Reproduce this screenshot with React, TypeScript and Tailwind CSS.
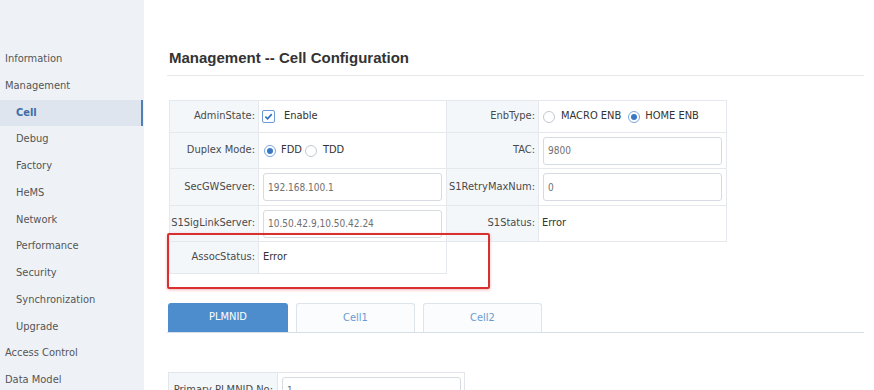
import React from "react";

type NavItem = { label: string; sub?: boolean; active?: boolean };

const nav: NavItem[] = [
  { label: "Information" },
  { label: "Management" },
  { label: "Cell", sub: true, active: true },
  { label: "Debug", sub: true },
  { label: "Factory", sub: true },
  { label: "HeMS", sub: true },
  { label: "Network", sub: true },
  { label: "Performance", sub: true },
  { label: "Security", sub: true },
  { label: "Synchronization", sub: true },
  { label: "Upgrade", sub: true },
  { label: "Access Control" },
  { label: "Data Model" },
];

const Checkbox: React.FC = () => (
  <span className="flex h-[13px] w-[13px] items-center justify-center rounded-[2px] border border-[#6b9bd6] bg-white">
    <svg width="9" height="9" viewBox="0 0 10 10" fill="none">
      <path d="M1.5 5.2 4 7.6 8.6 2.4" stroke="#2f6fc0" strokeWidth="1.8" />
    </svg>
  </span>
);

const Radio: React.FC<{ checked?: boolean }> = ({ checked }) => (
  <span
    className={`flex h-[12px] w-[12px] items-center justify-center rounded-full border bg-white ${
      checked ? "border-[#7aa8de]" : "border-[#c3c9d1]"
    }`}
  >
    {checked && <span className="h-[6px] w-[6px] rounded-full bg-[#3a78c6]" />}
  </span>
);

const Field: React.FC<{ value: string }> = ({ value }) => (
  <div className="ml-[4px] flex h-[28px] w-[179px] items-center rounded-[3px] border border-[#d6dbe1] bg-white px-[4px] text-[10px] text-[#707070]">
    {value}
  </div>
);

const Label: React.FC<{ text: string; cls?: string }> = ({ text, cls = "" }) => (
  <div
    className={`flex items-center justify-end whitespace-nowrap border-r border-b border-[#e5e9ee] bg-[#f4f7fa] pr-[3px] text-[11px] text-[#4a4a4a] ${cls}`}
  >
    {text}
  </div>
);

const Value: React.FC<{ children: React.ReactNode; cls?: string }> = ({
  children,
  cls = "",
}) => (
  <div
    className={`flex items-center whitespace-nowrap border-r border-b border-[#e5e9ee] bg-white text-[11px] text-[#333] ${cls}`}
  >
    {children}
  </div>
);

export default function App() {
  return (
    <div className="relative flex h-[390px] w-[874px] overflow-hidden bg-white font-['DejaVu_Sans_Condensed','Liberation_Sans',Arial,sans-serif]">
      <aside className="h-full w-[144px] shrink-0 bg-[#eef2f7] pt-[46px]">
        {nav.map((n) => (
          <div
            key={n.label}
            className={`flex h-[26.75px] w-[143px] items-center text-[11px] ${
              n.sub ? "pl-[16px]" : "pl-[5px]"
            } ${
              n.active
                ? "border-r-2 border-[#4f7fb5] bg-[#dfe5ee] font-bold text-[#3d6ea5]"
                : "text-[#555]"
            }`}
          >
            {n.label}
          </div>
        ))}
      </aside>

      <main className="flex-1 pt-[48px] pl-[23px] pr-[10px]">
        <h1 className="border-b border-[#e6e8eb] pb-[7px] pl-[2px] font-['Liberation_Sans',Arial,sans-serif] text-[15px] leading-[20px] font-bold text-[#333]">
          Management -- Cell Configuration
        </h1>

        <div className="mt-[24px] ml-[2px] grid grid-cols-[90px_188px_92px_188px] grid-rows-[33px_36px_37px_36px_32px]">
          <Label text="AdminState:" cls="border-t border-l" />
          <Value cls="border-t">
            <span className="ml-[3px] mr-[9px]">
              <Checkbox />
            </span>
            Enable
          </Value>
          <Label text="EnbType:" cls="border-t" />
          <Value cls="border-t">
            <span className="ml-[4px] mr-[6px]">
              <Radio />
            </span>
            MACRO ENB
            <span className="ml-[7px] mr-[5px]">
              <Radio checked />
            </span>
            HOME ENB
          </Value>

          <Label text="Duplex Mode:" cls="border-l" />
          <Value>
            <span className="ml-[5px] mr-[5px]">
              <Radio checked />
            </span>
            FDD
            <span className="ml-[3px] mr-[6px]">
              <Radio />
            </span>
            TDD
          </Value>
          <Label text="TAC:" />
          <Value>
            <Field value="9800" />
          </Value>

          <Label text="SecGWServer:" cls="border-l" />
          <Value>
            <Field value="192.168.100.1" />
          </Value>
          <Label text="S1RetryMaxNum:" />
          <Value>
            <Field value="0" />
          </Value>

          <Label text="S1SigLinkServer:" cls="border-l" />
          <Value>
            <Field value="10.50.42.9,10.50.42.24" />
          </Value>
          <Label text="S1Status:" />
          <Value>
            <span className="ml-[3px]">Error</span>
          </Value>

          <Label text="AssocStatus:" cls="border-l" />
          <Value>
            <span className="ml-[4px]">Error</span>
          </Value>
        </div>

        <div className="mt-[29px] flex gap-[8px] border-b border-[#d6dee7] pl-[1px]">
          <div className="flex h-[29px] w-[120px] items-center justify-center rounded-t-[3px] bg-[#4d8dcd] text-[11px] text-white">
            PLMNID
          </div>
          <div className="flex h-[29px] w-[119px] items-center justify-center rounded-t-[3px] border border-b-0 border-[#dde4ec] bg-[#fafcfe] text-[11px] text-[#6a9bd0]">
            Cell1
          </div>
          <div className="flex h-[29px] w-[119px] items-center justify-center rounded-t-[3px] border border-b-0 border-[#dde4ec] bg-[#fafcfe] text-[11px] text-[#6a9bd0]">
            Cell2
          </div>
        </div>

        <div className="mt-[39px] ml-[1px] flex h-[37px] w-[297px] border border-[#e2e6eb]">
          <div className="flex w-[109px] items-center justify-end whitespace-nowrap border-r border-[#e2e6eb] bg-[#f4f7fa] pr-[4px] text-[11px] text-[#4a4a4a]">
            Primary PLMNID No:
          </div>
          <div className="flex items-center">
            <Field value="1" />
          </div>
        </div>
      </main>

      <div className="pointer-events-none absolute left-[167px] top-[233px] h-[56px] w-[323px] rounded-[2px] border-2 border-[#d8302f] shadow-[0_1px_3px_rgba(216,48,47,0.35)]" />
    </div>
  );
}
